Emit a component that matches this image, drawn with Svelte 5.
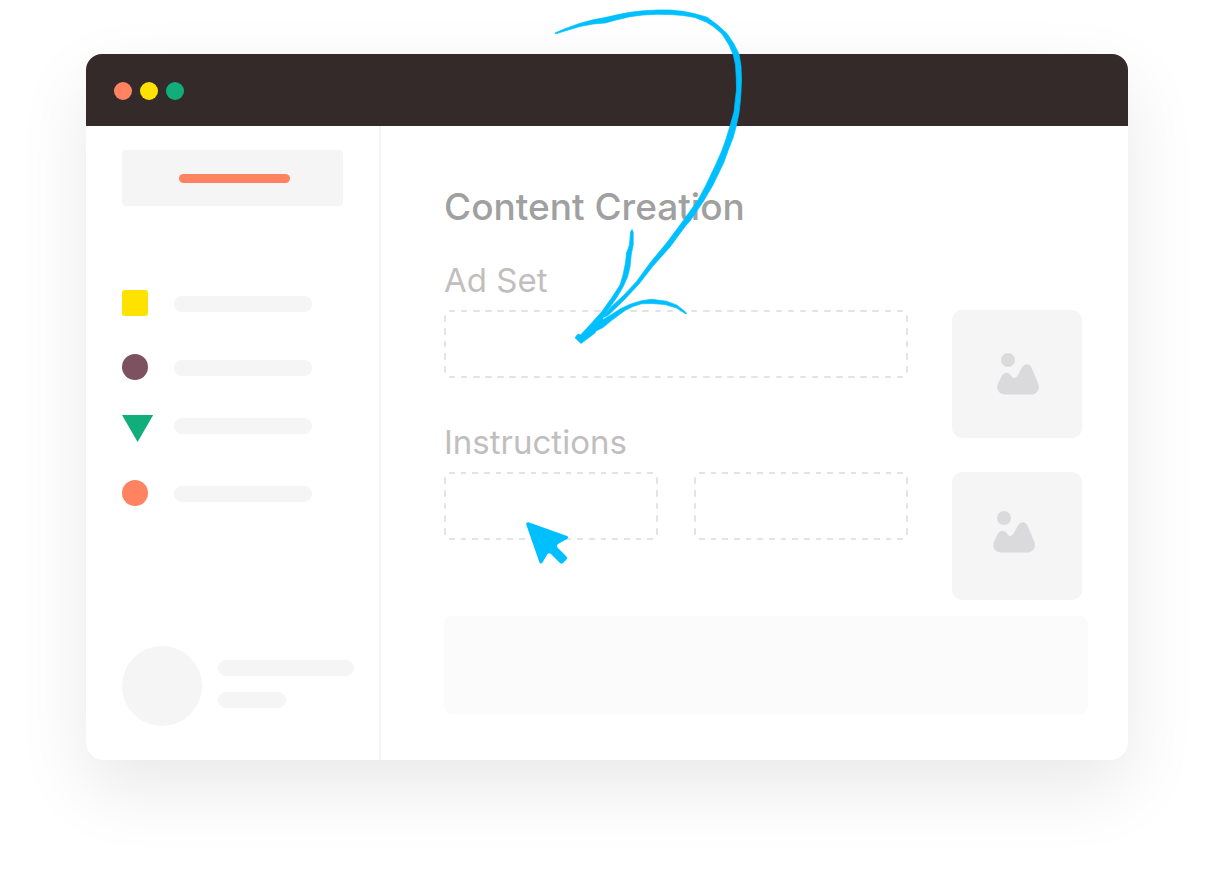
<script>
  const menu = ['square', 'plum', 'triangle', 'coral'];
  const thumbs = ['centered', 'raised'];
</script>

<div class="page">
  <div class="window">
    <header class="titlebar">
      <span class="dot coral"></span>
      <span class="dot yellow"></span>
      <span class="dot green"></span>
    </header>

    <div class="body">
      <aside class="sidebar">
        <div class="brand"><span></span></div>

        <ul class="menu">
          {#each menu as shape}
            <li>
              <svg width="32" height="30" viewBox="0 0 32 30" aria-hidden="true">
                {#if shape === 'square'}
                  <rect width="26" height="26" rx="3" fill="#ffe200" />
                {:else if shape === 'plum'}
                  <circle cx="13" cy="13" r="13" fill="#7d5260" />
                {:else if shape === 'triangle'}
                  <path d="M0 3H31.200L15.600 30Z" fill="#11ae7c" />
                {:else}
                  <circle cx="13" cy="13" r="13" fill="#ff8360" />
                {/if}
              </svg>
              <span class="line"></span>
            </li>
          {/each}
        </ul>

        <div class="profile">
          <span class="avatar"></span>
          <div class="lines">
            <span class="line"></span>
            <span class="line short"></span>
          </div>
        </div>
      </aside>

      <main class="main">
        <h1>Content Creation</h1>

        <div class="columns">
          <form class="fields">
            <div class="field">
              <label for="ad-set">Ad Set</label>
              <input id="ad-set" type="text" />
            </div>
            <div class="field">
              <label id="instructions-label" for="instructions">Instructions</label>
              <div class="pair">
                <input id="instructions" type="text" />
                <input type="text" aria-labelledby="instructions-label" />
              </div>
            </div>
          </form>

          <div class="thumbs">
            {#each thumbs as place}
              <div class="thumb {place}">
                <svg width="42" height="42" viewBox="0 0 42 42" aria-hidden="true">
                  <circle cx="11" cy="7" r="7" />
                  <path
                    d="M8 41.500C2 41.500-1.500 36 1 30.500L4.500 23.500C6.500 19 11.500 18.500 14 22.500C16 26 18.500 26 21 22L25 14.500C27.500 10 32.500 10 34.500 14.500L41 30C43.500 36 40 41.500 34 41.500Z"
                  />
                </svg>
              </div>
            {/each}
          </div>
        </div>

        <div class="panel"></div>
      </main>
    </div>

    <svg class="arrow" width="200" height="340" viewBox="550 6 200 340" aria-hidden="true">
      <!-- shaft -->
      <path
        d="M555 33L565 28.700L580 23.300L593 19.800L605 17.600L617 14.800L630 12.300L643 10.800L657 10L670 10L683 11.300L695 13.800L707 17.200L717 24.500L727 33.500L734 44L739 54L741 66L741.500 80L741 92L740.300 101L739 113L736.300 126L733 138L728.300 150L724 162L718.300 174L713 185L703 202L690 221L685.500 226L670 247L653 266L639 284L625 299L608 315.500L602 318L611.500 306.500L623.500 295.500L636.500 281.500L650 263L666.500 243L680 225L693 207L698 200L705 187L711 174.500L716 164L721.700 151L726 139L730 126L734 112L735.300 100L736.500 90L736.300 78L735.500 65L733.300 55L729 45L722 34L714 27L706.700 22.300L695 17.500L683 15.500L670 14.500L657 14.300L643 15L630 16.700L617 19.800L605 23L593 24L580 26.500L565 30.900L556 33.800Z"
      />
      <!-- head -->
      <path
        d="M632 229.500L633.200 232L633.200 245L631.300 254L630 267L627.500 277L623 287L616.500 298L610 307L602.500 317.500L603 319.500L610 315.500L620 309L630 304.300L641.500 300.700L651.500 299.300L666.500 301.200L677 305.200L681.500 308.700L686.500 313L686 314L676.500 308L665 304.500L651.500 303.500L641.500 303.800L633 306.500L625 310.500L611.500 320.500L603 327.500L596 331L595 333L581 343.500L575 337.700L578 334L580.500 335L588 327L601.500 312L611.500 298L620 285L623 275L625.500 263L626.500 253L629.500 245L630.500 232Z"
      />
    </svg>

    <svg class="cursor" width="43" height="43" viewBox="0 0 43 43" aria-hidden="true">
      <path
        d="M2.500 .300L41 14C43 14.800 42.500 16.300 41 17L32 22Q30 23.500 31.500 25.500L40.500 34.500Q42 36 40.500 37.500L37 41Q35.500 42.500 34 41L25 32Q23 30.500 21.500 32L16.500 40.500Q15 42.500 13.500 40.500L.200 2.500Q0 0 2.500 .300Z"
      />
    </svg>
  </div>
</div>

<style>
  :global(body) {
    margin: 0;
    background: #fff;
  }

  .page {
    padding: 54px 86px 118px;
    font-family: Inter, 'Liberation Sans', sans-serif;
    overflow: hidden;
  }

  .window {
    position: relative;
    background: #fff;
    border-radius: 18px;
    box-shadow: 0 28px 72px rgba(0, 0, 0, 0.09);
  }

  .titlebar {
    display: flex;
    align-items: center;
    gap: 8px;
    height: 72px;
    box-sizing: border-box;
    padding: 2px 28px 0;
    background: #332a29;
    border-radius: 16px 16px 0 0;
  }

  .dot {
    width: 18px;
    height: 18px;
    border-radius: 50%;
  }

  .coral {
    background: #ff8360;
  }

  .yellow {
    background: #ffe200;
  }

  .green {
    background: #11ae7c;
  }

  .body {
    display: flex;
  }

  .sidebar {
    flex: 0 0 295px;
    box-sizing: border-box;
    display: flex;
    flex-direction: column;
    padding: 24px 25px 34px 36px;
    border-right: 2px solid #f5f5f5;
  }

  .brand {
    display: flex;
    align-items: center;
    justify-content: center;
    height: 56px;
    margin-right: 11px;
    padding-left: 3px;
    border-radius: 4px;
    background: #f5f5f5;
  }

  .brand span {
    width: 111px;
    height: 9px;
    border-radius: 5px;
    background: #ff8360;
  }

  .menu {
    display: grid;
    grid-template-rows: 64px 58px 68px 26px;
    margin: 84px 0 0;
    padding: 0;
    list-style: none;
  }

  .menu li {
    display: flex;
    gap: 20px;
  }

  .menu svg {
    flex: none;
  }

  .menu .line {
    width: 138px;
    margin-top: 6px;
  }

  .line {
    height: 16px;
    border-radius: 8px;
    background: #f5f5f5;
  }

  .profile {
    display: flex;
    gap: 16px;
    margin-top: auto;
  }

  .avatar {
    flex: none;
    width: 80px;
    height: 80px;
    border-radius: 50%;
    background: #f5f5f5;
  }

  .lines {
    flex: 1;
    display: flex;
    flex-direction: column;
    gap: 16px;
    padding-top: 14px;
  }

  .short {
    width: 50%;
  }

  .main {
    flex: 1;
    min-width: 0;
    padding: 57px 40px 46px 63px;
  }

  h1 {
    margin: 0 0 31px;
    font-size: 37px;
    line-height: 48px;
    font-weight: 500;
    color: #a0a0a0;
  }

  .columns {
    display: flex;
    gap: 44px;
    padding-right: 6px;
  }

  .fields {
    flex: 1;
    min-width: 0;
    display: flex;
    flex-direction: column;
    gap: 46px;
  }

  label {
    display: block;
    height: 48px;
    font-size: 33px;
    line-height: 36px;
    color: #c1bebe;
  }

  /* The border tile holds one 6px dash per side, repeated to fit each edge. */
  input {
    display: block;
    width: 100%;
    min-width: 0;
    height: 68px;
    box-sizing: border-box;
    padding: 0 16px;
    border: 2px solid transparent;
    border-image: url("data:image/svg+xml,%3Csvg xmlns='http://www.w3.org/2000/svg' width='16' height='16'%3E%3Cpath d='M5 0h6v2H5zM5 14h6v2H5zM0 5h2v6H0zM14 5h2v6h-2z' fill='%23e3e3e3'/%3E%3C/svg%3E")
      2 / 2px round;
    background: transparent;
    font: inherit;
    font-size: 24px;
    color: #a0a0a0;
    outline: none;
  }

  .pair {
    display: flex;
    gap: 36px;
  }

  .thumbs {
    flex: 0 0 130px;
    display: flex;
    flex-direction: column;
    gap: 34px;
    padding-top: 48px;
  }

  .thumb {
    display: grid;
    place-items: center;
    box-sizing: border-box;
    height: 128px;
    border-radius: 10px;
    background: #f5f5f5;
  }

  .thumb svg {
    fill: #dadadc;
  }

  .centered {
    padding-left: 2px;
  }

  .raised {
    padding: 0 6px 8px 0;
  }

  .panel {
    height: 98px;
    margin-top: 16px;
    border-radius: 8px;
    background: #fbfbfb;
  }

  .arrow,
  .cursor {
    position: absolute;
    fill: #00bfff;
    pointer-events: none;
  }

  .arrow {
    left: 464px;
    top: -48px;
    stroke: #00bfff;
    stroke-width: 0.7;
    stroke-linejoin: round;
  }

  .cursor {
    left: 440px;
    top: 468px;
  }
</style>
